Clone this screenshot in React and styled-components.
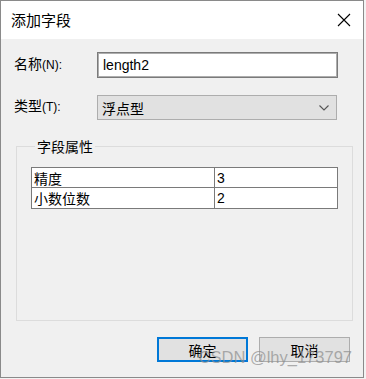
import React from "react";
import styled, { createGlobalStyle } from "styled-components";

const Global = createGlobalStyle`
  html, body { margin: 0; padding: 0; background: #f3f3f3; }
  body { font-family: "Noto Sans CJK SC", "Liberation Sans", sans-serif; }
`;

const Window = styled.div`
  width: 362px;
  height: 376px;
  border: 1px solid #8a8a8a;
  background: #f0f0f0;
  display: flex;
  flex-direction: column;
  position: relative;
  overflow: hidden;
`;

const TitleBar = styled.div`
  height: 38px;
  background: #ffffff;
  display: flex;
  align-items: center;
  justify-content: space-between;
  padding: 0 12px 0 10px;
  flex-shrink: 0;
`;

const Title = styled.span`
  font-size: 15px;
  color: #000;
  font-family: "Noto Sans CJK SC", sans-serif;
  margin-top: -2px;
`;

const Body = styled.div`
  display: flex;
  flex-direction: column;
  padding: 13px 24px 0 13px;
`;

const FieldRow = styled.div`
  display: flex;
  align-items: center;
  margin-bottom: ${(p) => p.$mb || 0}px;
`;

const Label = styled.span`
  width: 83px;
  font-size: 14px;
  color: #000;
  font-family: "Noto Sans CJK SC", sans-serif;
  margin-top: ${(p) => p.$mt || 0}px;
  align-self: flex-start;
  white-space: nowrap;
`;

const Mnemonic = styled.span`
  font-family: "Liberation Sans", sans-serif;
  font-size: 12px;
`;

const Input = styled.div`
  width: 234px;
  height: 24px;
  border: 1px solid #7a7a7a;
  box-shadow: inset 0 0 0 1px #adadad;
  background: #fff;
  display: flex;
  align-items: center;
  padding-left: 5px;
  font-family: "Liberation Sans", sans-serif;
  font-size: 14px;
  color: #000;
  box-sizing: content-box;
`;

const Select = styled.div`
  border: 1px solid #adadad;
  background: #e1e1e1;
  display: flex;
  align-items: center;
  justify-content: space-between;
  padding: 0 7px 0 4px;
  box-sizing: border-box;
  width: 240px;
  height: 25px;
  font-size: 14px;
  font-family: "Noto Sans CJK SC", sans-serif;
  color: #000;
`;

const Group = styled.fieldset`
  margin: 16px 0 0 2px;
  padding: 6px 14px 0 14px;
  border: 1px solid #dcdcdc;
  border-radius: 0;
  height: 185px;
  box-sizing: border-box;
  width: 337px;
`;

const Legend = styled.legend`
  font-size: 14px;
  padding: 0 2px;
  margin-left: 4px;
  font-family: "Noto Sans CJK SC", sans-serif;
  color: #000;
`;

const Table = styled.div`
  display: grid;
  grid-template-columns: 183px 1fr;
  border: 1px solid #7a7a7a;
  background: #fff;
  width: 307px;
  box-sizing: border-box;
  margin-top: 5px;
`;

const Cell = styled.div`
  height: 20px;
  display: flex;
  align-items: center;
  padding-left: 2px;
  font-family: ${(p) => (p.$num ? '"Liberation Sans", sans-serif' : '"Noto Sans CJK SC", sans-serif')};
  font-size: 14px;
  border-right: ${(p) => (p.$first ? "1px solid #7a7a7a" : "none")};
  border-bottom: ${(p) => (p.$top ? "1px solid #7a7a7a" : "none")};
  box-sizing: border-box;
  color: #000;
`;

const Buttons = styled.div`
  display: flex;
  justify-content: flex-end;
  gap: 11px;
  padding: 16px 13px 0 0;
`;

const Button = styled.div`
  width: 91px;
  height: 25px;
  box-sizing: border-box;
  background: #e1e1e1;
  border: ${(p) => (p.$primary ? "2px solid #0078d7" : "1px solid #adadad")};
  display: flex;
  align-items: center;
  justify-content: center;
  font-size: 14px;
  font-family: "Noto Sans CJK SC", sans-serif;
  color: #000;
`;

const Watermark = styled.div`
  position: absolute;
  right: 11px;
  bottom: 10px;
  font-family: "Liberation Sans", sans-serif;
  font-size: 16.5px;
  color: rgba(140, 140, 140, 0.7);
  pointer-events: none;
`;

export default function App() {
  return (
    <>
      <Global />
      <Window>
        <TitleBar>
          <Title>添加字段</Title>
          <svg width="14" height="14" viewBox="0 0 14 14">
            <path d="M1 1 L13 13 M13 1 L1 13" stroke="#000" strokeWidth="1.1" fill="none" />
          </svg>
        </TitleBar>
        <Body>
          <FieldRow $mb={17}>
            <Label $mt={1}>
              名称<Mnemonic>(N):</Mnemonic>
            </Label>
            <Input>length2</Input>
          </FieldRow>
          <FieldRow>
            <Label $mt={0}>
              类型<Mnemonic>(T):</Mnemonic>
            </Label>
            <Select>
              <span>浮点型</span>
              <svg width="10" height="6" viewBox="0 0 10 6">
                <path d="M0.5 0.5 L5 5 L9.5 0.5" stroke="#555" strokeWidth="1.1" fill="none" />
              </svg>
            </Select>
          </FieldRow>
          <Group>
            <Legend>字段属性</Legend>
            <Table>
              <Cell $first $top>精度</Cell>
              <Cell $num $top>3</Cell>
              <Cell $first>小数位数</Cell>
              <Cell $num>2</Cell>
            </Table>
          </Group>
        </Body>
        <Buttons>
          <Button $primary>确定</Button>
          <Button>取消</Button>
        </Buttons>
        <Watermark>CSDN @lhy_173797</Watermark>
      </Window>
    </>
  );
}
